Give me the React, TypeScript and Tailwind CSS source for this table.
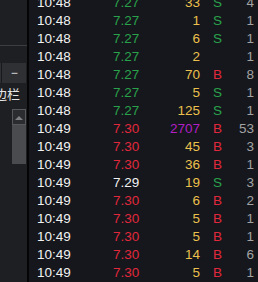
type Tick = {
  time: string;
  price: string;
  pc: string;
  vol: string;
  vc: string;
  side: string;
  count: string;
};

const G = "text-[#2aa24b]";
const R = "text-[#e2283c]";
const W = "text-[#f2f2f2]";
const Y = "text-[#ecc04c]";
const P = "text-[#b01fc6]";

const ticks: Tick[] = [
  { time: "10:48", price: "7.27", pc: G, vol: "33", vc: Y, side: "S", count: "4" },
  { time: "10:48", price: "7.27", pc: G, vol: "1", vc: Y, side: "S", count: "1" },
  { time: "10:48", price: "7.27", pc: G, vol: "6", vc: Y, side: "S", count: "1" },
  { time: "10:48", price: "7.27", pc: G, vol: "2", vc: Y, side: "", count: "1" },
  { time: "10:48", price: "7.27", pc: G, vol: "70", vc: Y, side: "B", count: "8" },
  { time: "10:48", price: "7.27", pc: G, vol: "5", vc: Y, side: "S", count: "1" },
  { time: "10:48", price: "7.27", pc: G, vol: "125", vc: Y, side: "S", count: "1" },
  { time: "10:49", price: "7.30", pc: R, vol: "2707", vc: P, side: "B", count: "53" },
  { time: "10:49", price: "7.30", pc: R, vol: "45", vc: Y, side: "B", count: "3" },
  { time: "10:49", price: "7.30", pc: R, vol: "36", vc: Y, side: "B", count: "1" },
  { time: "10:49", price: "7.29", pc: W, vol: "19", vc: Y, side: "S", count: "3" },
  { time: "10:49", price: "7.30", pc: R, vol: "6", vc: Y, side: "B", count: "2" },
  { time: "10:49", price: "7.30", pc: R, vol: "5", vc: Y, side: "B", count: "1" },
  { time: "10:49", price: "7.30", pc: R, vol: "5", vc: Y, side: "B", count: "1" },
  { time: "10:49", price: "7.30", pc: R, vol: "14", vc: Y, side: "B", count: "6" },
  { time: "10:49", price: "7.30", pc: R, vol: "5", vc: Y, side: "B", count: "1" },
];

const SidePanel = () => {
  return (
    <div className="flex w-[27px] shrink-0 flex-col bg-[#1d1f23]">
      <div className="h-[45px]" />
      <div className="h-px bg-[#3b3d41]" />
      <div className="h-[17px]" />
      <div className="flex h-[20px] pr-[1px]">
        <div className="w-px bg-[#2e3034]" />
        <div className="w-px bg-[#18191c]" />
        <div className="flex flex-1 items-center justify-center bg-[#2e3034] text-[13px] text-[#e6e6e6]">
          －
        </div>
      </div>
      <div className="flex h-[20px] items-center justify-end overflow-hidden pr-[7px] pt-[1px]">
        <span className="whitespace-nowrap text-[13px] leading-none text-[#e6e6e6] [font-family:'Noto_Sans_CJK_SC',sans-serif]">
          侧边栏
        </span>
      </div>
      <div className="h-[6px]" />
      <div className="ml-[12px] w-[14px]">
        <div className="flex h-[16px] items-center justify-center border border-[#55575b] bg-[#2a2c30]">
          <svg width="8" height="5" viewBox="0 0 8 5">
            <path d="M0 5 L4 1 L8 5 Z" fill="#7d7f83" />
          </svg>
        </div>
        <div className="h-[39px] bg-[#4a4b4f]" />
      </div>
    </div>
  );
};

const TickRow = ({ t }: { t: Tick }) => {
  return (
    <div className="flex h-[18px] items-center whitespace-nowrap pl-[8px]">
      <span className={`w-[76px] ${W}`}>{t.time}</span>
      <span className={`w-[28px] ${t.pc}`}>{t.price}</span>
      <span className={`w-[59px] text-right ${t.vc}`}>{t.vol}</span>
      <span className={`w-[23px] pl-[13px] ${t.side === "B" ? R : G}`}>{t.side}</span>
      <span className="w-[31px] text-right text-[#a3a3a3]">{t.count}</span>
    </div>
  );
};

export default function App() {
  return (
    <div className="flex h-[282px] w-[258px] overflow-hidden bg-[#15171c] text-[13.5px] [font-family:'Liberation_Sans',Arial,sans-serif]">
      <SidePanel />
      <div className="w-[2px] shrink-0 bg-[#050505]" />
      <div className="flex-1 overflow-hidden">
        <div className="-mt-[6px]">
          {ticks.map((t, i) => (
            <TickRow key={i} t={t} />
          ))}
        </div>
      </div>
    </div>
  );
}
